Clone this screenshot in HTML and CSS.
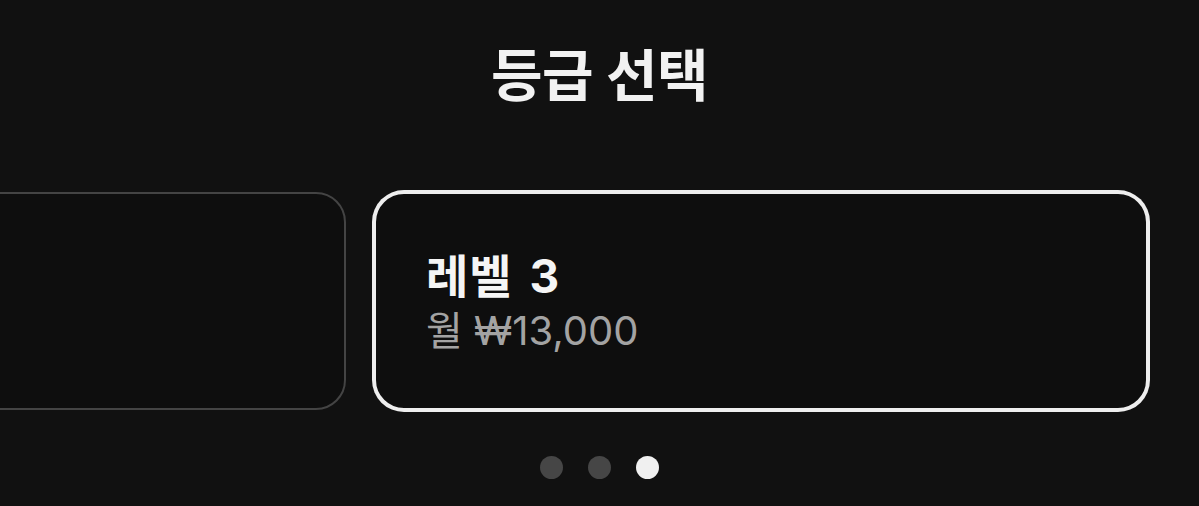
FILE: index.html
```html
<!DOCTYPE html>
<html lang="ko">
<head>
  <meta charset="utf-8">
  <title>등급 선택</title>
  <link rel="stylesheet" href="styles.css">
</head>
<body>
  <h1 class="title">등급 선택</h1>

  <div class="carousel">
    <div class="track">
      <div class="plan">
        <div class="plan-name">레벨 1</div>
        <div class="plan-price">월 ₩5,000</div>
      </div>
      <div class="plan">
        <div class="plan-name">레벨 2</div>
        <div class="plan-price">월 ₩9,000</div>
      </div>
      <div class="plan active">
        <div class="plan-name">레벨 3</div>
        <div class="plan-price">월 ₩13,000</div>
      </div>
    </div>
  </div>

  <div class="dots">
    <span class="dot"></span>
    <span class="dot"></span>
    <span class="dot active"></span>
  </div>
</body>
</html>
```

FILE: styles.css
```css
body {
  margin: 0;
  background-color: #111111;
  color: #f2f2f2;
  font-family: Inter, "Noto Sans CJK KR", sans-serif;
  overflow: hidden;
}

.title {
  margin: 0;
  padding-top: 43px;
  text-align: center;
  font-size: 56px;
  line-height: 66px;
  font-weight: 700;
  letter-spacing: -0.5px;
}

.carousel {
  overflow: hidden;
  margin-top: 79px;
  padding: 4px 0;
}

/* slides sit side by side; the track is shifted to show the last one */
.track {
  display: flex;
  gap: 28px;
  transform: translateX(-1230px);
}

.plan {
  flex: 0 0 774px;
  box-sizing: border-box;
  height: 218px;
  border: 2px solid #444444;
  border-radius: 30px;
  background-color: #0e0e0e;
  padding: 55px 50px 0;
}

.plan.active {
  border-color: #eeeeee;
  box-shadow: 0 0 0 2px #eeeeee;
}

.plan-name {
  font-size: 46px;
  line-height: 54px;
  font-weight: 700;
  letter-spacing: 1px;
  word-spacing: 5px;
  color: #f5f5f5;
}

.plan-price {
  margin-top: 4px;
  font-size: 40px;
  line-height: 48px;
  color: #a3a3a3;
}

.dots {
  display: flex;
  justify-content: center;
  gap: 25px;
  margin-top: 42px;
}

.dot {
  width: 23px;
  height: 23px;
  border-radius: 50%;
  background-color: #464646;
}

.dot.active {
  background-color: #f0f0f0;
}
```
